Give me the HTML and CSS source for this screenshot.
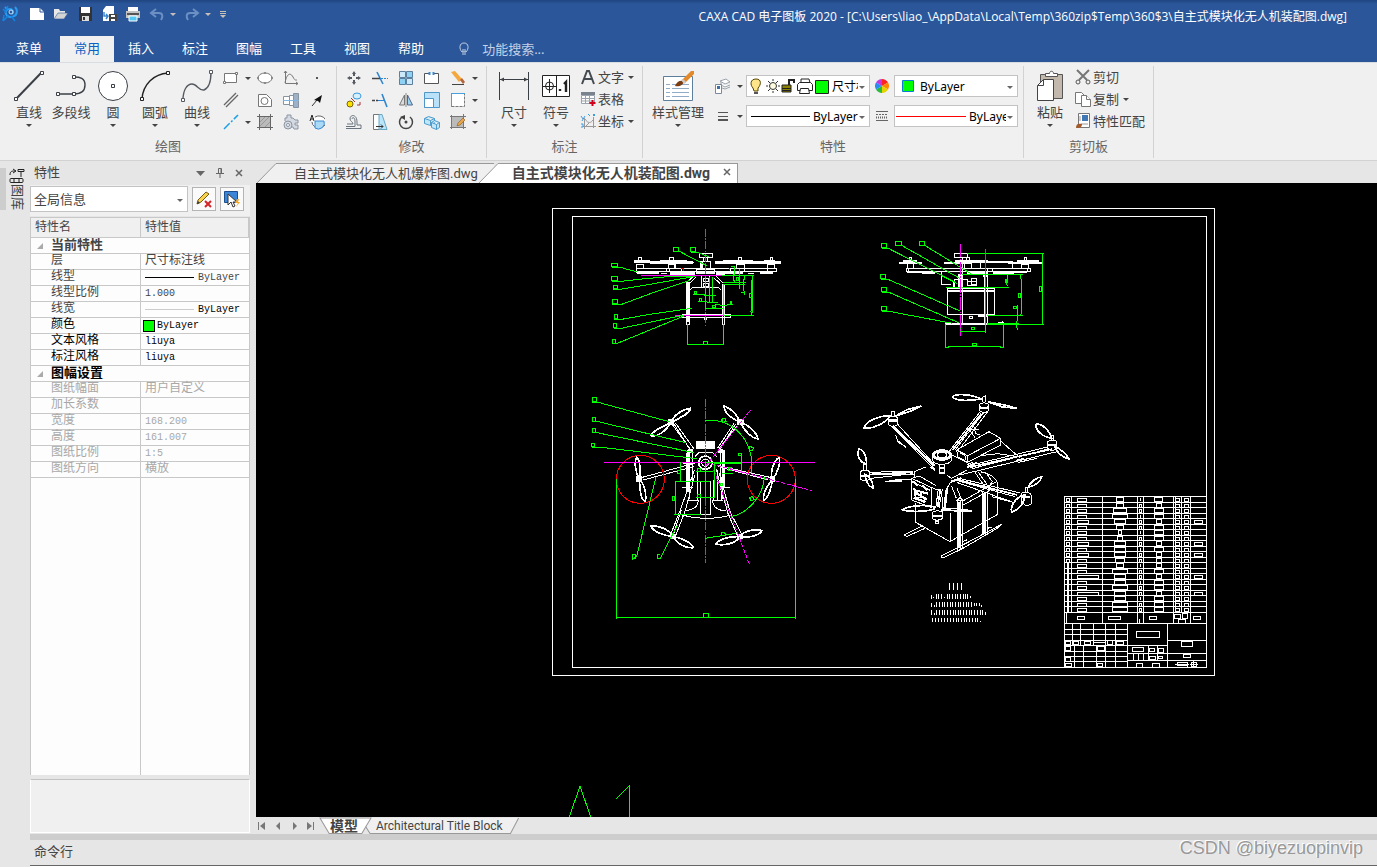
FILE: index.html
```html
<!DOCTYPE html>
<html lang="zh-CN">
<head>
  <meta charset="UTF-8">
  <meta name="viewport" content="width=device-width, initial-scale=1.0">
  <title>CAXA CAD 电子图板 2020</title>
  <link rel="stylesheet" href="styles.css">
</head>
<body>
  <header class="titlebar">
    <div class="quick">
      <svg class="logo" width="16" height="18" viewBox="0 0 16 18"><path d="M3 2l3 3M13 2c3 3 2 8-1 9-3 2-7 1-8-2s1-5 4-5 4 4 2 5" fill="none" stroke="#2a9bf0" stroke-width="2"/><path d="M1 16l6-6M1 4l3 3M9 11l4 5M2 10l-1 6M6 1L3 8" fill="none" stroke="#1583e0" stroke-width="1.500"/><circle cx="9" cy="7" r="2" fill="none" stroke="#bfe4ff"/></svg>
      <button aria-label="新建"><svg width="16" height="14"><path d="M1 1h10l4 4v8H1z" fill="#fff"/><path d="M11 1v4h4" fill="none" stroke="#2b579a"/></svg></button>
      <button aria-label="打开"><svg width="16" height="14"><path d="M1 12V2h5l1 2h5v2" fill="#e8e8e8"/><path d="M1 12l4-6h10l-4 6z" fill="#d3d3d3" stroke="#2b579a" stroke-width=".6"/></svg></button>
      <button aria-label="保存"><svg width="16" height="16"><path d="M2 1h13v14H2z" fill="#333"/><path d="M4 1h9v6H4z" fill="#fff"/><path d="M5 10h7v5H5z" fill="#ddd"/><path d="M6 11h2v3H6z" fill="#333"/></svg></button>
      <button aria-label="另存为"><svg width="16" height="16"><path d="M5 0h8v9H2V4z" fill="#fff"/><path d="M2 9h10v6H2z" fill="#fff"/><path d="M3 6v4h4m-2-2 2 2-2 3" fill="none" stroke="#3b8ad0" stroke-width="1.500"/><path d="M8 8h8v7H8z" fill="#444"/><path d="M10 9h4v2h-4zM10 13h4v2h-4z" fill="#fff"/></svg></button>
      <button aria-label="打印"><svg width="16" height="16"><path d="M3 1h10v5H3z" fill="#fff"/><path d="M1 5h14v7H1z" fill="#c4c4c4"/><path d="M2 7h12v2H2z" fill="#555"/><path d="M4 10h8v5H4z" fill="#54c8f2" stroke="#fff"/></svg></button>
      <button aria-label="撤销"><svg width="16" height="14"><path d="M7 2L2 6l5 4M3 6h7c4 0 4 4 2 7" fill="none" stroke="#6c8fc4" stroke-width="2"/></svg><i class="caret"></i></button>
      <button aria-label="重做"><svg width="16" height="14"><path d="M9 2l5 4-5 4M13 6H6c-4 0-4 4-2 7" fill="none" stroke="#6c8fc4" stroke-width="2"/></svg><i class="caret"></i></button>
      <button aria-label="自定义"><svg width="8" height="9"><path d="M1 1.500h6M1 3.500h6" stroke="#c8c0b8"/><path d="M1 5h6L4 8z" fill="#c8c0b8"/></svg></button>
    </div>
    <h1 class="title">CAXA CAD 电子图板 2020 - [C:\Users\liao_\AppData\Local\Temp\360zip$Temp\360$3\自主式模块化无人机装配图.dwg]</h1>
  </header>

  <nav class="menu">
    <a class="app" href="#">菜单</a>
    <a class="active" href="#">常用</a>
    <a href="#">插入</a>
    <a href="#">标注</a>
    <a href="#">图幅</a>
    <a href="#">工具</a>
    <a href="#">视图</a>
    <a href="#">帮助</a>
    <label class="search">
      <svg width="12" height="14" fill="none" stroke="#c3d0e6"><path d="M4 10C1 7 1 1 6 1s5 6 2 9zM4 12h4M5 10V7m2 3V7"/></svg>
      <input type="text" placeholder="功能搜索..." aria-label="功能搜索">
    </label>
  </nav>

  <div class="ribbon">
    <section class="group g-draw">
      <div class="tools">
        <button class="big"><svg width="32" height="32" fill="#fff" stroke="#3b3f46"><path d="M3 29L28 3" stroke-width="2"/><path d="M1.500 27.500h3v3h-3zM27.500 1.500h3v3h-3z"/></svg>直线<i class="caret"></i></button>
        <button class="big"><svg width="32" height="32" fill="none" stroke="#3b3f46"><path d="M3 24h16c6 0 11-2 11-9s-5-8-11-8" stroke-width="1.400"/><g fill="#fff"><path d="M1.500 22.500h3v3h-3zM17.500 22.500h3v3h-3zM17.500 5.500h3v3h-3z"/></g></svg>多段线</button>
        <button class="big"><svg width="32" height="32" fill="#fff" stroke="#3b3f46"><circle cx="16" cy="16" r="14.500"/><path d="M14.500 14.500h3v3h-3z"/></svg>圆<i class="caret"></i></button>
        <button class="big"><svg width="32" height="32" fill="none" stroke="#222"><path d="M3 29C4 14 15 4 29 3" stroke-width="1.400"/><path d="M1.500 27.500h3v3h-3zM27.500 1.500h3v3h-3z" fill="#fff"/></svg>圆弧<i class="caret"></i></button>
        <button class="big"><svg width="32" height="32" fill="none" stroke="#555a62"><path d="M2 30C2 20 6 14 11 14s7 7 12 6c5-2 7-9 7-18" stroke-width="1.400"/><path d="M.500 28.500h3v3h-3zM28.500.500h3v3h-3z" fill="#fff"/></svg>曲线<i class="caret"></i></button>
        <div class="icons draw-icons">
          <button aria-label="矩形"><svg width="16" height="16" fill="#fff" stroke="#777"><path d="M1.500 3.500h12v9h-12z"/><path d="M.500 11.500h2v2h-2zM12.500 2.500h2v2h-2z"/></svg><i class="caret"></i></button>
          <button aria-label="椭圆"><svg width="16" height="16" fill="#fff" stroke="#777"><ellipse cx="8" cy="8" rx="7" ry="5"/><path d="M.500 7.500h1v1h-1zM14.500 7.500h1v1h-1zM7.500 2.500h1v1h-1zM7.500 12.500h1v1h-1z"/></svg></button>
          <button aria-label="公式曲线"><svg width="16" height="16" fill="none" stroke="#777"><path d="M2.500 1v12.500H15M1 3l1.500-2L4 3M13 12l2 1.500-2 1.500M2 13C4 2 8 3 10 7s3 3 4 3"/></svg></button>
          <button aria-label="点"><svg width="16" height="16"><path d="M7 7h2v2H7z" fill="#555"/></svg></button>
          <button aria-label="平行线"><svg width="16" height="16" stroke="#666" stroke-width="1.300"><path d="M1 13L13 1M3 15L15 3"/></svg></button>
          <button aria-label="轮廓"><svg width="16" height="16" fill="#fff" stroke="#777"><path d="M1.500 2.500h8l5 5v7h-13z"/><circle cx="7.500" cy="9" r="3.500"/></svg></button>
          <button aria-label="孔轴"><svg width="16" height="16" fill="#fff" stroke="#8a949e"><path d="M.500 4.500h6v8h-6zM6.500 3.500h4v10h-4z"/><path d="M10.500 1.500h5v14h-5z" fill="#9db2c8"/><path d="M0 8.500h16" stroke="#7fb6e0"/></svg></button>
          <button aria-label="箭头"><svg width="16" height="16"><path d="M3 14l5-6" stroke="#333"/><path d="M13 3l-2 8-2-2-4-1z" fill="#111"/></svg></button>
          <button aria-label="中心线"><svg width="16" height="16"><path d="M1 15L15 1" stroke="#1ba0e6" stroke-width="1.500" stroke-dasharray="8 2 2 2"/></svg><i class="caret"></i></button>
          <button aria-label="填充"><svg width="16" height="16" fill="none" stroke="#888"><path d="M3 3h10v10H3z" fill="#bbb" stroke="none"/><path d="M0 2.500h16M2.500 0v16M0 13.500h16M13.500 0v16" stroke="#666"/><path d="M3 8l5-5M3 12l9-9M8 13l5-5" stroke="#999"/></svg></button>
          <button aria-label="齿轮"><svg width="16" height="16" fill="#d5dae2" stroke="#8b95a1"><path d="M2 7V4h2V1h4v3h2l2 2h3v3h-3v2h3v4h-4l-1-2H7"/><circle cx="5" cy="11" r="4"/><circle cx="5" cy="11" r="1.500" fill="#fff"/></svg></button>
          <button aria-label="局部放大"><svg width="16" height="16"><path d="M6 3a7 6 0 1 1-3 5" fill="#fff" stroke="#666"/><path d="M6 7h9a6 6 0 0 1-9 7z" fill="#a9daf7" stroke="#3b8ad0"/><path d="M1 7l2-6 2 6M2 5h3" fill="none" stroke="#222"/></svg></button>
        </div>
      </div>
      <h2>绘图</h2>
    </section>

    <section class="group g-modify">
      <div class="tools">
        <div class="icons modify-icons">
          <button aria-label="平移"><svg width="16" height="16" fill="#555a62"><path d="M8 1l2 3H6zM8 15l2-3H6zM1 8l3-2v4zM15 8l-3-2v4zM7 4h2v2H7zM7 10h2v2H7zM4 7h2v2H4zM10 7h2v2h-2z"/></svg></button>
          <button aria-label="裁剪"><svg width="16" height="16" stroke="#2f86d0"><path d="M5 2l6 12" stroke-width="1.600"/><path d="M0 8.500h8" stroke="#444" stroke-width="1.500"/><path d="M9 8.500h7" stroke-dasharray="2 1"/></svg></button>
          <button aria-label="阵列"><svg width="16" height="16" stroke="#5c7f9e"><path d="M1.500 1.500h6v6h-6zM8.500 8.500h6v6h-6z" fill="#cbe9fb"/><path d="M8.500 1.500h6v6h-6zM1.500 8.500h6v6h-6z" fill="#8fd0f5"/></svg></button>
          <button aria-label="打断"><svg width="16" height="16"><path d="M5 3.500H.500v10h14v-10H10" fill="#fff" stroke="#555"/><path d="M5.500 2v3M9.500 2v3" stroke="#3b8ad0" stroke-width="2"/></svg></button>
          <button aria-label="删除"><svg width="16" height="16"><path d="M1 2l4-1 7 8-3 3z" fill="#f3a73c"/><path d="M10 10l2-2 3 4-2 2z" fill="#b5653b"/><path d="M2 14.500h12" stroke="#444"/></svg><i class="caret"></i></button>
          <button aria-label="复制"><svg width="16" height="16"><ellipse cx="11" cy="4" rx="4" ry="3" fill="#d6effd" stroke="#3b9ad8"/><path d="M5 6l4 4M11 13h3v-3" fill="none" stroke="#a33"/><circle cx="4" cy="12" r="3" fill="#ffe100" stroke="#776600"/></svg></button>
          <button aria-label="延伸"><svg width="16" height="16" stroke="#2f86d0"><path d="M10 2l5 13" stroke-width="1.600"/><path d="M0 8.500h6" stroke="#444" stroke-width="1.500" stroke-dasharray="3 1"/><path d="M6 8.500h6"/></svg></button>
          <button aria-label="镜像"><svg width="16" height="16"><path d="M6.500 3v10H1.500z" fill="#ddd" stroke="#777"/><path d="M9.500 3v10h5z" fill="#9ad4f5" stroke="#568"/><path d="M8 1v14" stroke="#888"/></svg></button>
          <button aria-label="缩放"><svg width="16" height="16" stroke="#4e97c8"><path d="M.500.500h15v15H.500z" fill="#b9e2fa"/><path d="M.500 6.500h9v9h-9z" fill="#fff"/></svg></button>
          <button aria-label="拉伸"><svg width="16" height="16" fill="#fff" stroke="#777"><path d="M1.500 1.500h13v13h-13z" stroke-dasharray="3 1"/><path d="M1.500 1v14M1 1.500h14" stroke="#4aa0dd"/></svg><i class="caret"></i></button>
          <button aria-label="等距线"><svg width="16" height="16" fill="none" stroke="#68747f"><path d="M0 14.500h15V11h-4V8c0-8-7-8-7-3 0 2 3 3 3 5H1M0 12.500h9V7c0-4-3-4-3-2"/></svg></button>
          <button aria-label="倾斜"><svg width="16" height="16"><path d="M1.500.500h6v15h-6z" fill="#fff" stroke="#777"/><path d="M7 .500h3l5 15H7z" fill="#b9e6fa" stroke="#68a6c6"/><path d="M4 12.500h7m-2-2 2 2-2 2" stroke="#333" fill="none"/></svg></button>
          <button aria-label="旋转"><svg width="16" height="16"><path d="M4 3a6.500 6.500 0 1 0 8 0" fill="none" stroke="#444" stroke-width="1.500"/><path d="M7 1v5L2 3z" fill="#444"/><circle cx="8" cy="8" r="1.500" fill="#444"/></svg></button>
          <button aria-label="分解"><svg width="16" height="16" fill="#c0e6fa" stroke="#4f9ccc"><path d="M.500 4.500l4-2 6 2v5l-4 2-6-2zM.500 4.500l6 2 4-2M6.500 6.500v5"/><path d="M7.500 8.500l3-2 5 2v5l-3 2-5-2zM7.500 8.500l5 2 3-2M12.500 10.500v5"/></svg></button>
          <button aria-label="编辑填充"><svg width="16" height="16"><path d="M2 3h11v10H2z" fill="#bbb"/><path d="M0 2.500h16M1.500 1v14M0 13.500h16M13.500 0v15" stroke="#777"/><path d="M7 12l1-3 5-5 2 2-5 5z" fill="#e8a64a" stroke="#8a5a20" stroke-width=".6"/></svg><i class="caret"></i></button>
        </div>
      </div>
      <h2>修改</h2>
    </section>

    <section class="group g-dim">
      <div class="tools">
        <button class="big"><svg width="32" height="32" stroke="#3b3f46" fill="#3b3f46"><path d="M1.500 2v28M30.500 2v28M2 9.500h28"/><path d="M2 9.500l4-2v4zM30 9.500l-4-2v4z" stroke="none"/></svg>尺寸<i class="caret"></i></button>
        <button class="big"><svg width="32" height="32" fill="#fff" stroke="#222"><path d="M2.500 5.500h27v21h-27zM16.500 5v22" /><circle cx="9.500" cy="16" r="4" fill="none"/><path d="M9.500 9v14M3 16.500h13"/><path d="M20 19v2m4-7 2-2v10" stroke-width="2.400"/></svg>符号<i class="caret"></i></button>
        <div class="list">
          <button><svg width="16" height="16"><path d="M2 15L7 2h2l5 13M4 10h8" fill="none" stroke="#444a52" stroke-width="2"/></svg>文字<i class="caret"></i></button>
          <button><svg width="16" height="16"><path d="M1 1h14v3H1z" fill="#79838d"/><path d="M1.500 4.500h13v8h-13zM1 7.500h14M1 10h14M5.500 4v9M9.500 4v9" fill="#fff" stroke="#9aa3ad"/><path d="M12.500 9v6M9.500 12h6" stroke="#d0021b" stroke-width="2"/></svg>表格</button>
          <button><svg width="16" height="16"><path d="M4.500 5v11M3 13.500h13M13.500 4v11M5 6c3 5 6 4 8 1M9 10l-3 3" fill="none" stroke="#999"/><path d="M1 3l2 3M5 3L2 8M8 1l2 2M13 1l2 2M15 1l-2 2M1 11h2v3H1" fill="none" stroke="#3b9ae0"/></svg>坐标<i class="caret"></i></button>
        </div>
      </div>
      <h2>标注</h2>
    </section>

    <section class="group g-prop">
      <div class="tools">
        <button class="big wide"><svg width="32" height="32"><path d="M1.500 6.500h29v24h-29z" fill="#fff" stroke="#5b7f9c"/><path d="M4 14.500h4M4 18.500h4M4 22.500h4M4 26.500h4M10 14.500h17M10 18.500h17M10 22.500h17M10 26.500h17" stroke="#8fabc6"/><path d="M13 16c2-5 5-6 9-5 0 4-5 6-9 5z" fill="#7b3c10"/><path d="M20 10l9-9 3 0v3l-9 9z" fill="#e28a2b"/><path d="M19 10l3 4 2-2-3-3z" fill="#ccc"/></svg>样式管理<i class="caret"></i></button>
        <div class="props">
          <button class="mini" aria-label="图层"><svg width="16" height="16"><path d="M5 3l6-2 4 3-5 2zM6 7l4 2 5-2M7 10l3 1 5-2M6 4v6" fill="#fff" stroke="#9aa3ac"/><path d="M.500 6.500h6v9h-6z" fill="#fff" stroke="#7a8a99"/><path d="M2 8h3v3H2z" fill="#3a6ea8"/></svg><i class="caret"></i></button>
          <div class="combo">
            <svg width="82" height="20" viewBox="0 0 82 20">
              <path d="M6 12c-3-3-3-9 3-9s5 6 2 9v3H7z" fill="#ffe58a" stroke="#554400"/><path d="M7 16h4v2H7z" fill="#555"/>
              <g stroke="#333"><circle cx="26" cy="10" r="3.500" fill="#fffbe0"/><path d="M26 3v2M26 15v2M19 10h2M31 10h2M21 5l2 2M29 13l2 2M31 5l-2 2M23 13l-2 2"/></g>
              <path d="M35 9h9v7h-9z" fill="#8b8000" stroke="#222"/><path d="M35 12.500h9M35 14.500h9" stroke="#222"/><path d="M42 9V4h5v3" fill="none" stroke="#222" stroke-width="2"/>
              <g fill="#fff" stroke="#222"><path d="M54 7V3h8l1 4"/><path d="M50.500 8.500l2-2h11l2 2v6h-15z"/><path d="M53.500 12.500h8l1 5h-10z"/></g>
              <path d="M68.500 4.500h13v13h-13z" fill="#0f0" stroke="#222"/>
            </svg>
            <select aria-label="当前图层"><option>尺寸标注线</option></select>
          </div>
          <svg class="mid" width="14" height="14" viewBox="-7 -7 14 14"><path d="M0 0L0-7A7 7 0 0 1 6-3.500z" fill="#f22"/><path d="M0 0L6-3.500A7 7 0 0 1 6 3.500z" fill="#f80"/><path d="M0 0L6 3.500A7 7 0 0 1 0 7z" fill="#e6d400"/><path d="M0 0V7A7 7 0 0 1-6 3.500z" fill="#2cbb3a"/><path d="M0 0L-6 3.500A7 7 0 0 1-6-3.500z" fill="#2a8bf2"/><path d="M0 0L-6-3.500A7 7 0 0 1 0-7z" fill="#c03ae0"/></svg>
          <div class="combo color">
            <svg width="12" height="12"><path d="M.500.500h11v11H.500z" fill="#0f0" stroke="#0a7bd6"/></svg>
            <select aria-label="颜色"><option>ByLayer</option></select>
          </div>
          <button class="mini" aria-label="线型"><svg width="16" height="16" stroke="#555"><path d="M3 4.500h10M3 8.500h10M3 11.500h10M3 12.500h10"/></svg><i class="caret"></i></button>
          <div class="combo">
            <svg width="63" height="20"><path d="M4 10.500h59" stroke="#000"/></svg>
            <select aria-label="线型"><option>ByLayer</option></select>
          </div>
          <svg class="mid" width="14" height="14" stroke="#666"><path d="M1 2.500h12M1 11.500h12" /><path d="M1 5.500h12" stroke-dasharray="2 1"/><path d="M1 8.500h12" stroke-dasharray="1 1" stroke-width="2"/></svg>
          <div class="combo">
            <svg width="71" height="20"><path d="M1 10.500h70" stroke="#f00"/></svg>
            <select aria-label="线宽"><option>ByLayer</option></select>
          </div>
        </div>
      </div>
      <h2>特性</h2>
    </section>

    <section class="group g-clip">
      <div class="tools">
        <button class="big"><svg width="32" height="32"><path d="M6.500 4.500h22v24h-22z" fill="#c2b8ac" stroke="#555"/><path d="M11.500 6.500v-3h4c0-3 4-3 4 0h4v3z" fill="#fff" stroke="#555"/><path d="M3.500 15.500l6-6h10v21h-16z" fill="#fff" stroke="#444"/><path d="M3.500 15.500h6v-6" fill="none" stroke="#444"/></svg>粘贴<i class="caret"></i></button>
        <div class="list">
          <button><svg width="16" height="16"><path d="M2 1l10 10M14 1L4 11" stroke="#777" stroke-width="2"/><circle cx="3" cy="13" r="2" fill="none" stroke="#555"/><circle cx="13" cy="13" r="2" fill="none" stroke="#555"/></svg>剪切</button>
          <button><svg width="16" height="16" fill="#fff" stroke="#777"><path d="M.500 1.500h6l3 3v8h-9z"/><path d="M6.500 4.500h5l4 4v7h-9z"/><path d="M11.500 4.500v4h4" /></svg>复制<i class="caret"></i></button>
          <button><svg width="16" height="16"><path d="M3.500.500h11v14h-11z" fill="#fff" stroke="#777"/><path d="M7 2h6v6H7z" fill="#3f78b5"/><path d="M5 3v5M6 11h7" stroke="#999"/><path d="M1 15c0-4 2-5 6-4 0 4-3 4-6 4z" fill="#a35a28"/></svg>特性匹配</button>
        </div>
      </div>
      <h2>剪切板</h2>
    </section>
  </div>

  <main class="work">
    <aside class="dock">
      <button class="dock-tab">
        <svg width="16" height="16" fill="none" stroke="#222"><path d="M1 7c0-4 2-4 5-4M4 1l3 2-3 2M9 1.500h6v2H9zM12 4v5" /><rect x="1" y="10.500" width="13" height="4" rx="1"/><path d="M5 11v3M10 11v3"/></svg>
        <span>图库</span>
      </button>
    </aside>

    <section class="panel">
      <header class="panel-head">
        <h2>特性</h2>
        <button aria-label="选项"><svg width="9" height="5"><path d="M0 0h9L4.500 5z" fill="#666"/></svg></button>
        <button aria-label="固定"><svg width="8" height="10" fill="none" stroke="#666"><path d="M2.500.500h3v5h-3zM5 1v5M0 5.500h8M4 6v4"/></svg></button>
        <button aria-label="关闭"><svg width="8" height="8" stroke="#666" stroke-width="1.500"><path d="M1 1l6 6M7 1L1 7"/></svg></button>
      </header>
      <div class="panel-bar">
        <div class="combo scope"><select aria-label="选择范围"><option>全局信息</option></select></div>
        <button aria-label="清除"><svg width="18" height="18"><path d="M2 14l1-4 8-8 3 2-8 8z" fill="#f7d24c" stroke="#7a5a10"/><path d="M2 14l1-3 2 2z" fill="#333"/><path d="M10 11l6 6M16 11l-6 6" stroke="#d5232a" stroke-width="2"/></svg></button>
        <button aria-label="选择"><svg width="18" height="18"><path d="M1.500 1.500h13v11h-13z" fill="#3b86d8" stroke="#1d4f8c"/><path d="M5 4v11l3-3 2 5 2-1-2-4h4z" fill="#fff" stroke="#333"/><path d="M14 9l-2 4h3l-2 4 4-5h-2l1-3z" fill="#f5a623"/></svg></button>
      </div>
      <div class="sheet">
        <table>
          <thead><tr><th>特性名</th><th>特性值</th></tr></thead>
          <tbody>
            <tr class="cat"><th colspan="2">当前特性</th></tr>
            <tr><td>层</td><td>尺寸标注线</td></tr>
            <tr><td>线型</td><td class="line"><div><i></i>ByLayer</div></td></tr>
            <tr><td>线型比例</td><td>1.000</td></tr>
            <tr class="dark-val"><td>线宽</td><td class="line thin"><div><i></i>ByLayer</div></td></tr>
            <tr class="dark"><td>颜色</td><td class="swatch"><div><i></i>ByLayer</div></td></tr>
            <tr class="dark"><td>文本风格</td><td>liuya</td></tr>
            <tr class="dark"><td>标注风格</td><td>liuya</td></tr>
            <tr class="cat dark"><th colspan="2">图幅设置</th></tr>
            <tr class="off"><td>图纸幅面</td><td>用户自定义</td></tr>
            <tr class="off"><td>加长系数</td><td></td></tr>
            <tr class="off"><td>宽度</td><td>168.200</td></tr>
            <tr class="off"><td>高度</td><td>161.007</td></tr>
            <tr class="off"><td>图纸比例</td><td>1:5</td></tr>
            <tr class="off"><td>图纸方向</td><td>横放</td></tr>
            <tr class="rest"><td></td><td></td></tr>
          </tbody>
        </table>
      </div>
      <div class="hint"></div>
    </section>

    <section class="docs">
      <nav class="doc-tabs">
        <a href="#"><svg width="24" height="21"><path d="M1 21L20 1.500h4V21z" fill="#f0f0f0"/><path d="M1 21L20 1.500h4" fill="none" stroke="#999"/></svg><span>自主式模块化无人机爆炸图.dwg</span></a>
        <a class="active" href="#"><svg width="24" height="21"><path d="M1 21L20 1.500h4V21z" fill="#fff"/><path d="M1 21L20 1.500h4" fill="none" stroke="#999"/></svg><span>自主式模块化无人机装配图.dwg<svg width="8" height="8" stroke="#666" stroke-width="1.500"><path d="M1 1l6 6M7 1L1 7"/></svg></span></a>
      </nav>

      <div class="canvas">
        <svg class="drawing" viewBox="256 183 1121 634" preserveAspectRatio="xMinYMin slice">
          <!-- sheet frame -->
          <path class="w one" d="M552.500 208.500h662v467h-662zM572.500 216.500h634v451h-634z"/>
          <path class="g one" d="M569 818l11-32 11 32M616 799l13-13v32"/>

          <!-- front view -->
          <svg x="580" y="225" width="240" height="130" viewBox="0 0 720 390">
            <path class="w" d="M358 86h40v11h-40zM370 97v12M383 97v12M362 110h28v20h-28zM368 110v20M168 130h420v9h-420zM260 130v9M268 130v9M304 130v9M450 130v9M493 130v9M562 130v9M348 134h56v12h-56zM170 118h20v12h-20zM264 118h22v12h-22zM282 112v18M470 118h22v12h-22zM562 118h20v12h-20zM176 98h8v10h-8zM269 98h11v12h-11zM474 98h11v12h-11zM570 98h8v10h-8z"/>
            <path class="w" d="M163 110h48M207 113h134M240 107h80M164 106h34M405 113h140M430 107h90M545 113h58M552 107h34M168 142h22M198 144h38M244 146h16M270 144h50M320 148h24M408 148h26M440 144h50M505 146h16M540 144h40" stroke-width="6"/>
            <path d="M163 104h48v11h-48zM210 108h130v8H210zM242 104h76v6h-76zM405 109h140v7H405zM430 104h90v6h-90zM545 108h57v8h-57zM552 104h34v6h-34zM170 140h66v6h-66zM270 142h74v7h-74zM408 142h82v6h-82zM540 140h40v6h-40zM362 110h8v20h-8zM350 140h54v8h-54z" fill="#fff"/>
            <path class="w" d="M340 154l-20 18M347 158l-17 16M408 154l22 20M401 158l20 18M365 152v34h24v-34M370 160h14v10h-14zM370 174h14v10h-14zM330 196l8-9h76l10 9M319 172v126h10v-126zM426 178v120h8v-120zM306 267h144v9h-144zM372 276h8v6h-8z"/>
            <path class="w heavy" d="M324 172v118"/>
            <path class="m" d="M183 151h242M285 271h145"/>
            <path class="m" d="M376 12v294" stroke-dasharray="24 4 5 4"/>
            <path class="r" d="M304 131h6v6M448 130v6"/>
            <path class="g" d="M425 151h97M430 271h92M516 151v14l-3 96 3 10M517 160v104M322 298v62M430 298v62M322 358h108M370 349h12v8h-12zM508 206h7v11h-7zM428 173h70M428 179h68M429 179v90M376 155v95M388 155v76M397 155v76M376 250h52M340 208h30l5 3h32M354 230h25l4 3h30M405 238h12l4 3h18l4-3h16M343 199h7v7h-7zM358 221h7v7h-7zM398 241h8v7h-8zM451 229h4v7h-4zM463 122v26l-3 3v14l4 4v5M452 125h10M478 133v60M469 157h6v9h-6zM493 152v10l-3 3v14l3 30M483 202h9"/>
            <path class="g" d="M280 68h16v11h-16zM281 80l19 0 80 42M332 68h15v11h-15zM332 82h20l36 14M94 116h18v9H94zM95 127h25l50 13M94 154h17v13H94zM95 169h30l60-7 100-9h60M101 182h12v9h-12zM100 193h20l90-15 130-23M97 223h15v13H97zM97 238h28l100-37 105-35M104 268h8v12h-8zM103 283h22l90-16 120-17M101 295h9v13h-9zM101 310h22l190-40M98 344h8v11h-8zM98 355h14l200-82"/>
          </svg>

          <!-- side view -->
          <svg x="860" y="225" width="200" height="130" viewBox="0 0 600 390">
            <path class="w" d="M283 86h40v11h-40zM297 98h9v200h-9M140 130h370v9H140zM144 130v9M398 130v9M502 130v9M142 115h18v15h-18zM314 115h20v15h-20zM361 112v18M457 118v12M485 118v12M484 118h20v12h-20zM148 97h7v10h-7zM319 98h9v12h-9zM492 97h8v10h-8zM244 140v39h28M283 187v-23h38v20M262 190h142v78H262zM382 130v168M373 150v148M334 160h14v18h-14zM322 168h26v14h-26M306 268h70M328 275h10v6h-10zM258 187h50M415 292h14l-3-4"/>
            <path d="M117 110h70v7h-70zM130 105h42v6h-42zM253 110h82v7h-82zM285 104h100v6H285zM335 107h125v6H335zM445 110h100v7H445zM470 104h66v6h-66zM140 139h36v5h-36zM160 139h50v5h-50zM186 142h40v5h-40zM320 142h60v5h-60zM398 141h32v5h-32zM412 142h50v5h-50zM462 139h40v5h-40zM262 195h142v6H262zM255 293h125v7H255zM354 269h28v6h-28zM278 170h7v16h-7zM368 148h14v8h-14zM294 146h14v40h-14z" fill="#fff"/>
            <path class="g" d="M322 86h229M547 86v212M380 298h171M305 148h184M482 148v12l2 6v96l-2 9M380 271h108M258 187h190M443 150v12l-3 4v12l5 6M538 184h7v15h-7zM475 205h7v12h-7zM436 163h7v10h-7zM461 244h9v6h-9zM472 240v40l-3 24 4 10M256 298v69h10M430 298v69h-10M264 364h158M338 355h11v6h-11zM301 319h76M301 290v34M376 298v26M334 307h9v6h-9zM380 295h96"/>
            <path class="g" d="M65 56h14v11H65zM65 69h18l208 106M107 50h18v11h-18zM125 61l176 100M179 50h14v11h-14zM194 61l140 86M62 149h14v11H62zM62 163h22l216 95M65 188h14v11H65zM65 202h22l211 92M65 245h14v11H65zM65 259h22l190 36"/>
            <path class="m" d="M301 57v275" stroke-dasharray="40 4 5 4"/>
            <path class="m" d="M376 72v226"/>
          </svg>

          <!-- top view -->
          <svg x="585" y="390" width="240" height="235" viewBox="0 0 720 705">
            <path class="w bold" d="M258 97c8-20 30-38 58-42 0 12-20 24-58 42zM258 97c-10 8-56 22-60 40 16 6 44-12 60-40zM465 97c-8-26-30-42-48-50 0 18 18 36 48 50zM465 97c24 6 50 30 54 50-22-4-42-28-54-50zM163 268c6-22 2-56-8-67-8 14-4 46 8 67zM163 268c16 14 22 46 18 67-16-8-16-40-18-67zM562 268c-8-26 6-56 20-66 6 18-4 46-20 66zM562 268c-2 26-12 56-26 64-4-20 10-44 26-64zM263 440c-10-24-46-34-66-32 6 16 38 28 66 32zM263 440c22 2 56 16 62 33-24 2-46-10-62-33zM465 440c10-18 46-24 66-18-8 14-36 22-66 18zM465 440c-14 22-50 28-72 22 8-14 40-24 72-22z"/>
            <path class="w" d="M262 104l55 75M272 100l56 78M267 102l50 80M455 108l-56 72M448 98l-50 76M452 102l-50 80M172 262l155-42M174 270l152-40M555 262l-155-35M550 270l-150-40M256 436l30-76 42-120M270 442l30-78 30-110M263 440l26-80M458 438l-30-70-34-130M470 432l-34-64-34-120M304 190v115M314 178v150M323 185v100M405 180v120M412 178v150M418 180v110M290 218h45M390 218h44M290 291h34M410 291h24M336 240v90M386 270v60M398 240v90M410 260v70M347 275h30v97h-30zM310 330h30c0 20-14 30-40 32M382 330h32M382 330c2 20 16 32 40 32M290 375c50 14 100 14 150 0M330 200l12-12h40l14 12"/>
            <path class="w heavy" d="M310 180v125M415 180v110M293 218h36M396 218h38"/>
            <circle class="w bold" cx="361" cy="218" r="20"/><circle class="w" cx="361" cy="218" r="11"/>
            <path d="M332 152h58v26h-58zM249 87h18v18h-18zM456 87h20v18h-20zM154 259h18v18h-18zM554 259h16v17h-16zM255 432h17v15h-17zM456 432h17v15h-17zM310 176h14v14h-14zM398 176h16v14h-16z" fill="#fff"/>
            <circle class="r" cx="166" cy="268" r="72"/><circle class="r" cx="559" cy="268" r="72"/>
            <path class="m" d="M57 217h633"/>
            <path class="m" d="M361 27v492" stroke-dasharray="24 4 5 4"/>
            <path class="m" d="M361 230L496 61M361 217l320 85M386 240l108 285" stroke-dasharray="14 4"/>
            <path class="g" d="M95 268v418M631 268v418M95 683h536M356 670h14v11h-14zM361 92c70-12 150 50 138 158M361 445l92-15M438 380c50-10 96-60 100-118M285 217v57M270 274v100M268 373h80M270 274h104M361 220v100M361 217h110M390 219h80M410 250h34M334 243h50M388 220v103M334 322h54M470 188v60M277 241h8v8h-8zM262 319h7v12h-7zM337 235h10v8h-10zM337 313h10v8h-10zM461 190h7v6h-7zM431 233h8v8h-8zM405 279h8v8h-8zM410 88l10-4 3 10-10 4zM494 170l11 2-2 10-11-2zM494 324l8-5 5 9-8 5zM409 428l10-2 2 9-10 2z"/>
            <path class="g" d="M23 23h10v11H23zM22 36h14l220 60M23 83h7v10h-7zM22 94h14l266 64M23 116h9v11h-9zM22 128h14l292 60M20 160h9v10h-9zM20 171h22l293 35M142 494h10v12h-10zM142 508l13-8 58-240M218 492h8M218 492v12h8l52-100"/>
          </svg>

          <!-- isometric view -->
          <svg x="845" y="385" width="235" height="245" viewBox="0 0 705 735">
            <path class="w bold" d="M135 92c-30 0-72 14-78 37 26 4 64-14 78-37zM150 94l36-20 43-11-36 17zM408 42c-26-14-76-18-86-6 14 14 60 10 86 6zM428 50l50 10 38 10-44-4zM620 160c-6-24-30-46-48-42 0 20 22 38 48 42zM630 185c12 4 36 22 42 37-22-6-36-18-42-37zM64 236c2-18-8-42-22-44-8 16 2 42 22 44zM60 268c10 4 26 22 24 41-12-4-22-20-24-41zM540 330c-22 2-46 30-40 51 22-6 38-28 40-51zM550 306c6-14 24-30 40-30-4 16-22 28-40 30zM268 366c-24-8-80-4-96 8 18 8 74 6 96-2zM288 374l50 4h42l-50-8z"/>
            <g class="w">
              <path d="M130 98c6-6 22-6 28 0v20c-6 8-22 8-28 0zM130 106c6 6 22 6 28 0M138 92v-12h9v12M403 58c6-6 22-6 28 0v18c-6 8-22 8-28 0zM403 64c6 6 22 6 28 0M413 50v-14l8-4v18M608 170c6-6 22-6 27 0v20c-6 8-22 8-27 0zM618 165v-14h8v14M46 260c6-6 22-6 28 0v22c-6 6-22 6-28 0zM56 255v-18h8v18M530 325c8-6 24-4 28 4v28l-14 6-14-12zM540 322v-14h7v14M262 382c6-6 24-6 30 0v18c-6 8-24 8-30 0zM262 390c8 6 22 6 30 0M271 402v12h10v-12"/>
              <path d="M135 120l125 125M145 122l125 120M158 118l110 120M152 150l8 22 20 12M160 168l24 20M404 82L312 200M415 84L330 195M428 80L345 190M367 132h34M370 130l20 28M386 122l6 24 14 4M608 186L370 242M610 192L385 250M636 200L345 270M520 232l56-12M75 262l130-4M78 280l127-14M76 270l130-2M120 290h22l10-6h50M335 278l190 46M330 285l180 50M335 292l170 60M440 335l68 18M272 370l8-58M282 370l10-58M296 378l6-60 14-26"/>
              <ellipse cx="291" cy="210" rx="29" ry="16"/><ellipse cx="291" cy="210" rx="14" ry="7"/>
              <path d="M262 212v14c8 16 48 16 58 0v-14M283 238v28h14v-28M335 195l97-55 35 20-99 52zM335 195l3 20 30 17v-20M467 160v20l-99 52M467 168l55 48-62-10-56 6M345 205c20 6 20 14 16 20M207 260l36-14M207 260v16M305 270l14 10 46-24M365 240l16-8v20M320 210l60 30M365 248l30-16"/>
              <path d="M200 280l58 27v60l-58-22zM258 307l20 8M200 290l56 26M204 278l20-4 50 28M212 355v57l103 58 143-82v-92c-6-20-24-30-50-36M315 385v85M292 335v50M334 340l-14-36M350 345l-14-36M350 350l104-60M355 360l90-50M390 262l30 44M400 262l26 36M408 264l14-2 20 28-14 20"/>
              <path d="M337 345v150M345 345v150M353 345v145M413 320v130M420 320v130M427 320v130M290 512l52-26 128-68M296 518l58-28 112-66M290 510l-2 6 10 2M180 448l54-26M186 454l54-24M180 446l-2 6 8 2M337 345h16l-8-8zM353 470l14-6M427 430l14-4"/>
            </g>
            <path class="w heavy" d="M205 290l15 12M232 300l16 16M206 310l10 16M210 322l36 22M225 345l16 6M206 338l22 8M226 320l24 6M318 290l30-10M270 255l-12-10M283 248h14M283 264h16M340 350v140M417 325v120M366 246l24-10M130 104h28M403 68h28M608 180h26M46 272h28M532 336h24M264 392h26M274 408h8M512 228l24-6M132 288h40"/>
            <path class="w bold" d="M142 124l124 118M409 86L322 196M622 192L376 246M80 268l124-6M336 284l180 46M278 366l8-54M300 372l8-70"/>
            <ellipse class="w bold" cx="219" cy="328" rx="9" ry="11"/><ellipse class="w heavy" cx="291" cy="210" rx="24" ry="12"/>
            <path class="w" d="M313 594v20M325 594v20M337 594v20M349 594v20M259 629v12M265 636v4M273 627v14M281 627v14M289 627v14M297 636v4M306 627v14M314 627v14M322 627v14M330 627v14M338 627v14M346 627v14M354 627v14M362 627v14M368 627v14M377 632v8M259 653v12M267 660v5M275 651v14M283 651v14M291 651v14M299 651v14M307 651v14M315 651v14M323 651v14M331 651v14M339 651v14M345 651v14M355 651v14M363 651v14M371 651v14M379 651v14M388 654v10M395 654v10M403 654v10M410 660v5M259 675v14M267 684v5M275 675v14M283 675v14M291 675v14M299 675v14M307 675v14M316 675v14M324 675v14M332 675v14M339 675v14M347 675v14M356 675v14M364 675v14M372 675v14M380 675v14M388 675v14M397 675v14M405 675v14M413 675v14M421 682v7M262 699v12M271 699v12M279 699v12M288 699v12M298 699v12M307 699v12M315 699v12M325 699v12M333 699v12M341 699v12M349 699v12M357 699v12M365 699v12M374 699v12M382 699v12M390 699v12M397 699v12M406 707v4"/>
          </svg>

          <!-- parts list and title block -->
          <svg x="1050" y="490" width="170" height="190" viewBox="0 0 510 570">
            <path class="w" id="parts" d=""/>
            <path class="w" d="M43 19h426v513H43zM65 19v348M157 19v382M263 19v382M280 19v382M371 19v382M376 19v350M394 19v350M421 19v382M43 367h426M43 400h426M49 367v33M268 387v13M82 379h22v9H82zM175 379h36v9h-36zM298 379h22v9h-22zM430 379h22v9h-22zM372 373h18v11h-18zM397 370h14v14h-14zM386 388h22M386 388v12M406 388v12"/>
            <path class="w" d="M43 418h190M43 433h190M43 450h190M43 466h190M43 484h190M43 499h190M43 515h190M68 400v66M91 400v66M131 400v66M166 400v66M196 400v66M233 400v132M73 466v66M100 466v66M140 466v66M167 466v66M196 466v66M352 400v132M352 451h117M352 490h117M352 511h117M233 466h119M233 490h119M233 511h119M295 466v45M322 466v45M250 490v21M264 490v21M279 490v21"/>
            <path class="w" d="M259 424h70v18h-70zM394 454h34v16h-34zM247 472h34v13h-34zM298 475h16v10h-16zM325 475h16v12h-16zM298 499h18v9h-18zM324 499h14v7h-14zM259 520h18v11h-18zM307 520h22v11h-22zM400 493h22v10h-22zM47 455h15v9H47zM70 455h16v9H70zM104 455h17v9h-17zM132 456h32M172 452h16v12h-16zM199 455h21v9h-21zM47 469h14v13H47zM142 469h22v12h-22zM47 502h14v11H47zM47 521h16v9H47zM142 521h15v9h-15z"/>
            <path class="w" d="M375 523h42M382 517h30v11l-30-3zM420 523h24M431 513v20M424 517h14v11h-14z"/>
          </svg>
        </svg>
      </div>

      <nav class="sheet-tabs">
        <button aria-label="第一个"><svg width="8" height="8" fill="#777"><path d="M0 0h1v8H0zM7 0v8L2 4z"/></svg></button>
        <button aria-label="上一个"><svg width="8" height="8" fill="#777"><path d="M6 0v8L2 4z"/></svg></button>
        <button aria-label="下一个"><svg width="8" height="8" fill="#777"><path d="M3 0v8l4-4z"/></svg></button>
        <button aria-label="最后一个"><svg width="8" height="8" fill="#777"><path d="M7 0h1v8H7zM1 0v8l5-4z"/></svg></button>
        <a class="active" href="#"><svg viewBox="0 0 50 17" preserveAspectRatio="none"><path d="M0 0l9 16.500h32L50 0z" fill="#fff" stroke="#999"/></svg><span>模型</span></a>
        <a class="second" href="#"><svg viewBox="0 0 152 17" preserveAspectRatio="none"><path d="M0 8l5 8.500h139L152 0H5z" fill="#f0f0f0"/><path d="M0 8l5 8.500h139L152 0" fill="none" stroke="#999"/></svg><span>Architectural Title Block</span></a>
      </nav>
    </section>
  </main>

  <footer class="command">
    <h2>命令行</h2>
    <input type="text" aria-label="命令行">
    <span class="mark">CSDN @biyezuopinvip</span>
  </footer>

  <script>
    // box widths per row of the parts list: name, part, material, remark
    const rows = [
      [26, 22, 24, 0], [26, 22, 16, 0], [26, 40, 26, 0], [26, 46, 26, 0],
      [32, 34, 16, 26], [26, 22, 26, 0], [26, 10, 26, 0], [26, 16, 26, 0],
      [32, 34, 16, 26], [26, 34, 26, 0], [32, 34, 16, 26], [26, 28, 16, 0],
      [26, 22, 16, 0], [26, 46, 26, 0], [62, 34, 16, 26], [26, 34, 26, 0],
      [26, 46, 26, 0], [62, 34, 16, 26], [26, 34, 26, 0], [26, 46, 26, 0],
      [26, 46, 26, 0]
    ];
    const step = 348 / rows.length;

    function box(x, y, w, h) {
      return `M${x} ${y}h${w}v${h}h${-w}z`;
    }

    let d = '';
    rows.forEach((row, i) => {
      const y = 19 + Math.round(i * step / 3) * 3;
      const [name, part, material, remark] = row;
      d += `M43 ${y}h426`;
      d += i < 12 ? box(50, y + 5, 8, 9) : box(52, y + 3, 3, 12);
      d += box(82, y + 6, name, 9);
      d += box(210 - part / 2, y + 3, part, 12);
      d += i % 3 ? box(268, y + 6, 6, 9) : `M271 ${y + 5}v10`;
      d += box(326 - material / 2, y + 4, material, 11);
      d += box(377, y + 5, 11, 11);
      d += box(403, y + 6, 13, 9);
      if (remark) {
        d += box(432, y + 6, remark, 9);
      }
    });
    document.getElementById('parts').setAttribute('d', d);
  </script>
</body>
</html>
```
FILE: styles.css
```css
* {
  box-sizing: border-box;
}

body {
  margin: 0;
  height: 100vh;
  display: flex;
  flex-direction: column;
  overflow: hidden;
  background: #e6e6e6;
  color: #444;
  font-family: "Noto Sans", "Noto Sans CJK SC", sans-serif;
  font-size: 13px;
}

h1, h2 {
  margin: 0;
  font-weight: normal;
}

button, input, select {
  font: inherit;
  color: inherit;
  border: none;
  background: none;
  padding: 0;
  margin: 0;
}

a {
  color: inherit;
  text-decoration: none;
}

svg {
  flex: none;
  display: block;
}

.caret {
  border: 3px solid transparent;
  border-top-color: #444;
  border-bottom: 0;
}

/* title bar */
.titlebar {
  height: 36px;
  flex: none;
  display: flex;
  align-items: center;
  justify-content: space-between;
  padding: 0 30px 8px 2px;
  background: linear-gradient(#1f4480, #2b579a 4px);
  color: #fff;
}

.quick {
  display: flex;
  align-items: center;
  gap: 8px;
}

.quick .logo {
  margin-right: 3px;
}

.quick button {
  display: flex;
  align-items: center;
  gap: 5px;
}

.quick .caret {
  border-top-color: #c8c0b8;
}

.title {
  font-family: "Open Sans", "Noto Sans CJK SC", sans-serif;
  font-size: 12px;
  line-height: 16px;
  white-space: nowrap;
  padding-top: 6px;
}

/* menu */
.menu {
  height: 26px;
  flex: none;
  display: flex;
  background: #2b579a;
  color: #fff;
  line-height: 24px;
}

.menu a {
  padding: 0 14px;
}

.menu .app {
  padding: 0 18px 0 16px;
}

.menu .active {
  background: #f0f0f0;
  color: #0b62c4;
}

.search {
  display: flex;
  align-items: center;
  gap: 12px;
  padding-left: 20px;
  color: #c3d0e6;
}

.search input {
  width: 120px;
  height: 22px;
}

.search input::placeholder {
  color: #c3d0e6;
}

/* ribbon */
.ribbon {
  height: 99px;
  flex: none;
  display: flex;
  padding-top: 3px;
  background: #f0f0f0;
  border-top: 1px solid #d8dde4;
  border-bottom: 1px solid #d2d2d2;
}

.group {
  border-right: 1px solid #d2d2d2;
  height: 92px;
}

.group h2 {
  text-align: center;
  font-size: 13px;
  line-height: 18px;
  color: #666;
}

.tools {
  height: 71px;
  display: flex;
  align-items: flex-start;
}

.g-draw .tools { padding: 1px 6px 0 8px; }
.g-modify .tools { padding: 1px 5px 0 4px; }
.g-dim .tools { padding: 1px 8px 0 6px; }
.g-prop .tools { padding: 1px 5px 0 1px; }
.g-clip .tools { padding: 1px 8px 0 5px; }

.big {
  width: 42px;
  padding-top: 3px;
  display: flex;
  flex-direction: column;
  align-items: center;
  line-height: 20px;
  white-space: nowrap;
}

.big.wide {
  width: 68px;
}

.big .caret {
  margin-top: 2px;
}

.icons {
  display: grid;
  grid-auto-rows: 22px;
}

.icons button {
  display: flex;
  align-items: center;
  gap: 6px;
  padding-left: 5px;
}

.draw-icons {
  grid-template-columns: 34px 26px 26px 26px;
}

.modify-icons {
  grid-template-columns: 26px 26px 26px 26px 36px;
}

.list {
  margin-left: 4px;
}

.g-dim .list {
  margin-left: 3px;
}

.list button {
  height: 22px;
  padding-bottom: 2px;
  display: flex;
  align-items: center;
  gap: 2px;
  line-height: 18px;
  white-space: nowrap;
}

.list .caret {
  margin-left: 2px;
}

.props {
  display: grid;
  grid-template-columns: 34px 124px 24px 124px;
  grid-auto-rows: 22px;
  row-gap: 8px;
  align-items: center;
  padding-top: 8px;
}

.mini {
  display: flex;
  align-items: center;
  gap: 6px;
  padding-left: 3px;
}

.mid {
  justify-self: center;
}

.combo {
  position: relative;
  height: 22px;
  display: flex;
  align-items: center;
  background: #fff;
  border: 1px solid #c3c3c3;
  color: #000;
  font-size: 12px;
  overflow: hidden;
}

.combo::after {
  content: "";
  position: absolute;
  right: 4px;
  top: 50%;
  border: 3px solid transparent;
  border-top-color: #666;
  border-bottom: 0;
}

.combo select {
  appearance: none;
  flex: 1;
  min-width: 0;
  margin-right: 11px;
  padding-left: 3px;
}

.combo.color {
  padding-left: 7px;
}

.combo.color select {
  padding-left: 6px;
}

/* work area */
.work {
  flex: 1;
  min-height: 0;
  display: flex;
}

.dock {
  width: 30px;
  flex: none;
  padding-top: 7px;
}

.dock-tab {
  width: 26px;
  border-left: 6px solid #cdcdcd;
  padding-left: 3px;
  display: flex;
  flex-direction: column;
}

.dock-tab span {
  writing-mode: vertical-rl;
  text-orientation: sideways;
  font-size: 13px;
  line-height: 16px;
}

.panel {
  width: 220px;
  flex: none;
  display: flex;
  flex-direction: column;
}

.panel-head {
  height: 24px;
  flex: none;
  display: flex;
  align-items: center;
  gap: 11px;
  padding: 0 7px 0 4px;
}

.panel-head h2 {
  font-size: 13px;
  line-height: 18px;
  padding-bottom: 3px;
  margin-right: auto;
}

.panel-bar {
  height: 31px;
  flex: none;
  display: flex;
  align-items: center;
  gap: 4px;
  padding: 0 6px 3px 0;
  background: #f0f0f0;
}

.panel-bar button {
  width: 24px;
  height: 24px;
  border: 1px solid #b4b4b4;
  background: #fafafa;
  display: grid;
  place-items: center;
}

.combo.scope {
  flex: 1;
  height: 26px;
  font-size: 13px;
  color: #444;
}

.sheet {
  flex: 1;
  min-height: 0;
  margin: 1px 0 4px;
  border: 1px solid #c8c8c8;
  border-bottom: 0;
  background: #fdfdfd;
}

.sheet table {
  width: 100%;
  height: 100%;
  table-layout: fixed;
  border-spacing: 0;
  font-family: "Liberation Mono", "Noto Sans CJK SC", monospace;
  font-size: 12px;
  line-height: 15px;
}

.sheet td, .sheet th {
  padding: 0;
  height: 16px;
  text-align: left;
  font-weight: normal;
  white-space: nowrap;
  border-bottom: 1px solid #c8c8c8;
}

.sheet thead th {
  height: 20px;
  padding: 2px 0 0 4px;
  background: #f0f0f0;
  border-right: 1px solid #c8c8c8;
}

.sheet thead th:first-child {
  width: 110px;
}

.sheet td:first-child {
  padding-left: 20px;
  border-right: 1px solid #c8c8c8;
}

.sheet td:last-child {
  padding-left: 4px;
}

/* values are mostly latin, 10px mono keeps the 6px advance */
.sheet tr:nth-child(n+3) td:last-child {
  font-size: 10px;
}

.sheet tr:nth-child(10) td:last-child,
.sheet tr:nth-child(15) td:last-child {
  font-size: 12px;
}

.sheet .cat th {
  font-size: 13px;
  font-weight: bold;
  padding-left: 20px;
}

.cat th::before {
  content: "";
  float: left;
  margin: 5px 0 0 -14px;
  border: 3px solid #aaa;
  border-left-color: transparent;
  border-top-color: transparent;
}

.dark td, .dark th, .dark-val td:last-child {
  color: #000;
}

.off td {
  color: #a8a8a8;
}

.sheet .rest td {
  height: auto;
  border-bottom: 0;
}

.line div, .swatch div {
  display: flex;
  align-items: center;
}

.line i {
  width: 49px;
  margin-right: 4px;
  border-top: 1px solid #000;
}

.thin i {
  border-color: #ccc;
}

.sheet td.swatch:last-child {
  padding-left: 0;
}

.swatch i {
  width: 12px;
  height: 12px;
  margin: 0 2px;
  background: #0f0;
  border: 1px solid #000;
}

.hint {
  height: 54px;
  flex: none;
  margin-bottom: 1px;
  background: #f0f0f0;
  border: 1px solid #fff;
  border-top-color: #c3c3c3;
}

.docs {
  flex: 1;
  min-width: 0;
  margin-left: 6px;
  display: flex;
  flex-direction: column;
}

.doc-tabs {
  height: 22px;
  flex: none;
  display: flex;
  align-items: flex-end;
  font-family: Roboto, "Noto Sans CJK SC", sans-serif;
}

.doc-tabs a {
  display: flex;
  height: 21px;
}

.doc-tabs a > span {
  display: flex;
  align-items: center;
  padding: 0 16px 3px 14px;
  background: #f0f0f0;
  border-top: 1px solid #999;
  margin-top: 1px;
}

.doc-tabs .active {
  margin-left: -16px;
  font-size: 14px;
  font-weight: bold;
}

.doc-tabs .active > span {
  gap: 13px;
  padding: 0 6px 3px 10px;
  background: #fff;
  border-right: 1px solid #999;
}

.canvas {
  flex: 1;
  min-height: 0;
  background: #000;
}

.drawing {
  width: 100%;
  height: 100%;
  shape-rendering: crispEdges;
}

.w, .g, .m, .r {
  fill: none;
  stroke-width: 3;
}

.w { stroke: #fff; }
.g { stroke: #0f0; }
.m { stroke: #f0f; }
.r { stroke: #f00; }

.bold {
  stroke-width: 5;
}

.heavy {
  stroke-width: 7;
}

.one {
  stroke-width: 1;
}

.sheet-tabs {
  height: 17px;
  flex: none;
  display: flex;
  align-items: center;
  font-family: Roboto, "Noto Sans CJK SC", sans-serif;
  font-size: 12px;
  line-height: 16px;
}

.sheet-tabs button {
  width: 16px;
  padding-left: 2px;
}

.sheet-tabs a {
  position: relative;
  padding: 0 13px 0 10px;
}

.sheet-tabs svg {
  overflow: visible;
}

.sheet-tabs a svg {
  position: absolute;
  inset: 0;
  width: 100%;
  height: 100%;
}

.sheet-tabs a span {
  position: relative;
}

.sheet-tabs .active {
  z-index: 1;
  font-size: 14px;
  font-weight: bold;
}

.sheet-tabs .second {
  margin-left: -6px;
  padding: 0 16px 0 11px;
}

/* command line */
.command {
  height: 33px;
  flex: none;
  position: relative;
  margin-left: 30px;
  border-top: 6px solid #cdcdcd;
}

.command h2 {
  height: 25px;
  padding-left: 4px;
  font-size: 13px;
  line-height: 22px;
}

.command input {
  display: block;
  width: 100%;
  height: 20px;
  background: #fff;
  border-top: 1px solid #666;
}

.mark {
  position: absolute;
  right: 14px;
  top: -4px;
  font-family: "Liberation Sans", Arial, sans-serif;
  font-size: 18px;
  line-height: 24px;
  color: #999;
  text-shadow: -1px -1px 0 #fff;
}
```
